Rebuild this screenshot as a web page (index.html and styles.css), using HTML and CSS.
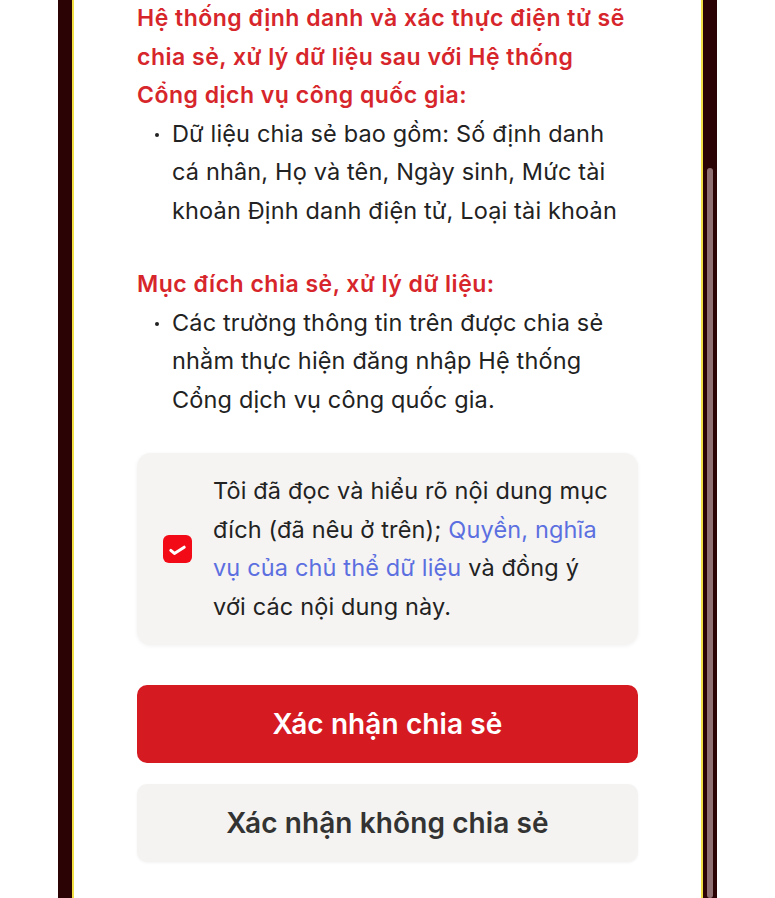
FILE: index.html
```html
<!DOCTYPE html>
<html lang="vi">
<head>
<meta charset="utf-8">
<link rel="stylesheet" href="styles.css">
</head>
<body>
<div class="frame">
  <div class="edge edge-left"></div>
  <main class="content">
    <h2 class="heading first">Hệ thống định danh và xác thực điện tử sẽ chia sẻ, xử lý dữ liệu sau với Hệ thống Cổng dịch vụ công quốc gia:</h2>
    <ul class="list">
      <li>Dữ liệu chia sẻ bao gồm: Số định danh cá nhân, Họ và tên, Ngày sinh, Mức tài khoản Định danh điện tử, Loại tài khoản</li>
    </ul>
    <h2 class="heading second">Mục đích chia sẻ, xử lý dữ liệu:</h2>
    <ul class="list">
      <li>Các trường thông tin trên được chia sẻ nhằm thực hiện đăng nhập Hệ thống Cổng dịch vụ công quốc gia.</li>
    </ul>
    <div class="consent">
      <span class="check">
        <svg width="29" height="28" viewBox="0 0 29 28"><path d="M7.8 15.4 L11.4 18.4 L21.2 12.2" fill="none" stroke="#fff" stroke-width="3" stroke-linecap="round" stroke-linejoin="round"/></svg>
      </span>
      <p class="consent-text">Tôi đã đọc và hiểu rõ nội dung mục đích (đã nêu ở trên); <a class="link">Quyền, nghĩa vụ của chủ thể dữ liệu</a> và đồng ý với các nội dung này.</p>
    </div>
    <button class="btn btn-primary">Xác nhận chia sẻ</button>
    <button class="btn btn-secondary">Xác nhận không chia sẻ</button>
  </main>
  <div class="edge edge-right"><div class="thumb"></div></div>
</div>
</body>
</html>
```
FILE: styles.css
```css
html, body {
  margin: 0;
  padding: 0;
  background: #ffffff;
  height: 100%;
  overflow: hidden;
}
body {
  font-family: Inter, "Noto Sans", "Liberation Sans", sans-serif;
  color: #222222;
}
.frame {
  display: flex;
  height: 898px;
  padding-left: 58px;
  padding-right: 58px;
}
.edge {
  width: 14px;
  background: #2c0305;
  flex: none;
  position: relative;
}
.edge-left {
  border-right: 2px solid #f2df45;
}
.edge-right {
  border-left: 2px solid #f2df45;
}
.thumb {
  position: absolute;
  left: 4px;
  top: 168px;
  bottom: 0;
  width: 6px;
  border-radius: 3px;
  background: #8e6e70;
}
.content {
  flex: 1;
  padding: 0 63px;
}
.heading {
  margin: 0;
  font-size: 23px;
  line-height: 38.5px;
  font-weight: 600;
  color: #d7262b;
  letter-spacing: 0.5px;
}
.heading.first {
  margin-top: -1px;
}
.heading.second {
  margin-top: 35px;
}
.list {
  margin: 0;
  padding: 0 14px 0 35px;
  list-style: none;
}
.list li {
  position: relative;
  font-size: 23.5px;
  line-height: 38.5px;
  color: #222222;
  letter-spacing: 0.15px;
}
.list li::before {
  content: "";
  position: absolute;
  left: -17px;
  top: 18px;
  width: 4px;
  height: 4px;
  border-radius: 50%;
  background: #222222;
}
.consent {
  margin-top: 34px;
  display: flex;
  align-items: center;
  background: #f5f4f3;
  border-radius: 14px;
  box-shadow: 0 1px 4px rgba(0,0,0,0.06);
  padding: 19px 22px 19px 26px;
}
.check {
  flex: none;
  width: 29px;
  height: 28px;
  border-radius: 6px;
  background: #f20a17;
  display: flex;
  margin-right: 21px;
}
.consent-text {
  margin: 0;
  font-size: 23.5px;
  line-height: 38.5px;
  color: #222222;
  letter-spacing: 0.15px;
}
.link {
  color: #5c6fe0;
}
.btn {
  display: block;
  width: 100%;
  height: 78px;
  border: 0;
  border-radius: 10px;
  font-family: Inter, "Noto Sans", "Liberation Sans", sans-serif;
  font-size: 28px;
  font-weight: 600;
  letter-spacing: 0.1px;
}
.btn-primary {
  margin-top: 40px;
  background: #d51a22;
  color: #ffffff;
}
.btn-secondary {
  margin-top: 21px;
  background: #f4f3f2;
  color: #333333;
  box-shadow: 0 1px 3px rgba(0,0,0,0.05);
}
```
